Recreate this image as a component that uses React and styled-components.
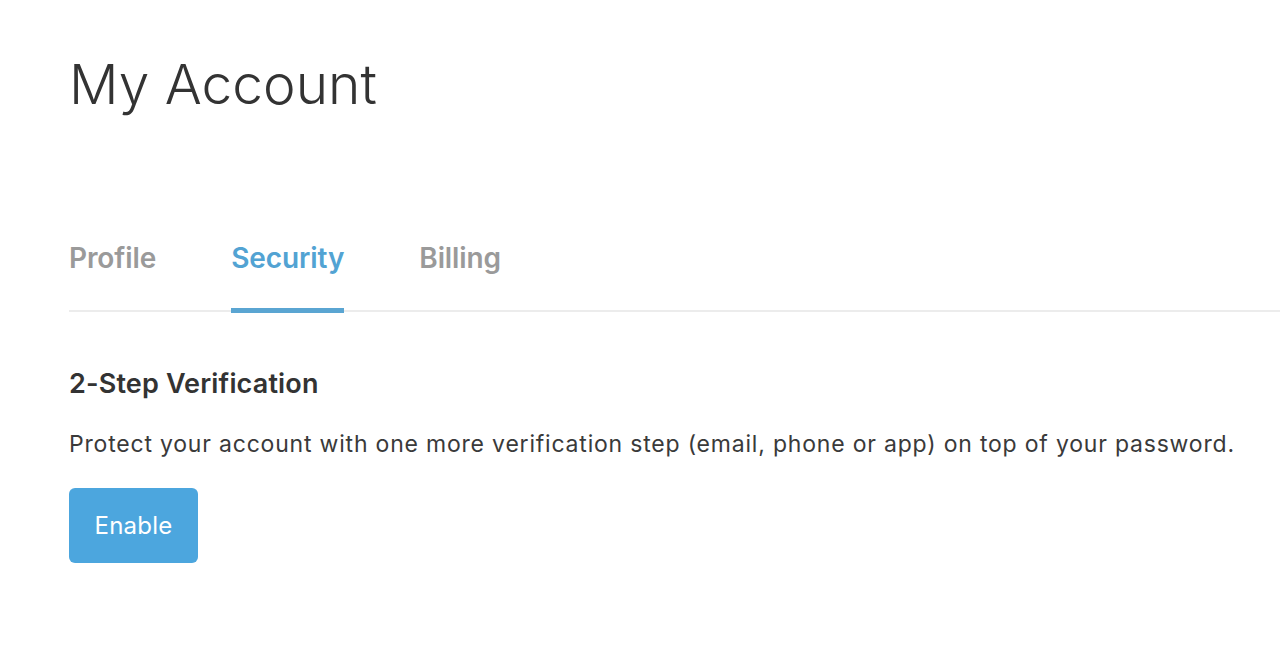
import React from "react";
import styled, { createGlobalStyle } from "styled-components";

const Global = createGlobalStyle`
  html, body { margin: 0; padding: 0; background: #fff; }
  body { font-family: Inter, "Noto Sans", sans-serif; color: #333; }
`;

const Page = styled.div`
  padding: 48px 0 0 69px;
`;

const Title = styled.h1`
  margin: 0;
  font-size: 55px;
  font-weight: 300;
  line-height: 72px;
  color: #333;
  letter-spacing: 0;
`;

const Tabs = styled.nav`
  display: flex;
  gap: 75px;
  margin-top: 122px;
  border-bottom: 2px solid #ececec;
`;

const Tab = styled.div`
  font-size: 28px;
  font-weight: 600;
  line-height: 32px;
  letter-spacing: -0.1px;
  padding-bottom: 34px;
  color: ${(p) => (p.$active ? "#52a3d3" : "#9a9a9a")};
  border-bottom: 5px solid ${(p) => (p.$active ? "#5aa5d2" : "transparent")};
  margin-bottom: -3px;
`;

const Section = styled.section`
  padding-top: 55px;
`;

const Heading = styled.h2`
  margin: 0;
  font-size: 27px;
  font-weight: 600;
  line-height: 34px;
  letter-spacing: 0.15px;
  color: #333;
`;

const Text = styled.p`
  margin: 28px 0 0;
  font-size: 23px;
  line-height: 30px;
  letter-spacing: 0.8px;
  color: #3a3a3a;
`;

const Button = styled.button`
  display: block;
  margin-top: 29px;
  width: 129px;
  height: 75px;
  border: none;
  border-radius: 6px;
  background: #4ca6de;
  color: #fff;
  font-family: inherit;
  font-size: 24px;
  letter-spacing: 0.2px;
  cursor: pointer;
`;

export default function App() {
  return (
    <>
      <Global />
      <Page>
        <Title>My Account</Title>
        <Tabs>
          <Tab>Profile</Tab>
          <Tab $active>Security</Tab>
          <Tab>Billing</Tab>
        </Tabs>
        <Section>
          <Heading>2-Step Verification</Heading>
          <Text>
            Protect your account with one more verification step (email, phone or app) on top of your password.
          </Text>
          <Button>Enable</Button>
        </Section>
      </Page>
    </>
  );
}
